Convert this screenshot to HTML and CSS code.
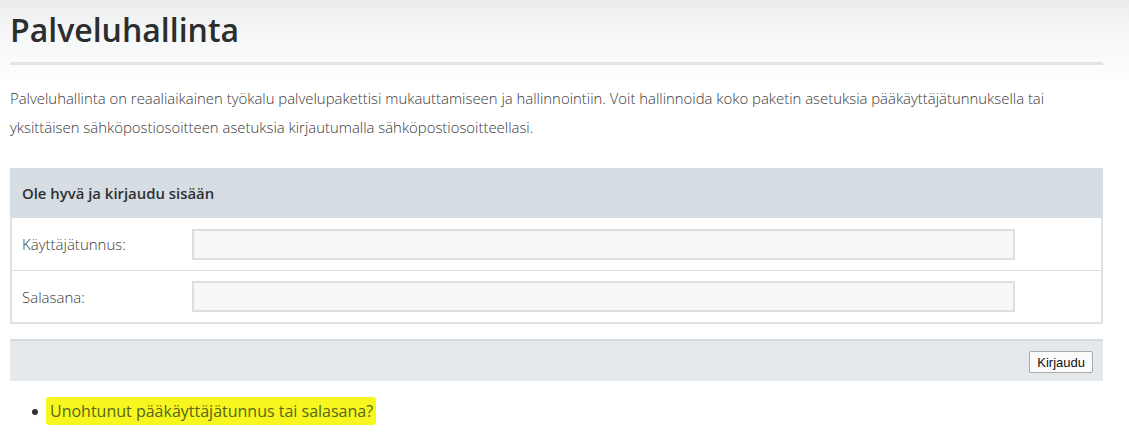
FILE: index.html
```html
<!DOCTYPE html>
<html lang="fi">
<head>
<meta charset="utf-8">
<title>Palveluhallinta</title>
<link rel="stylesheet" href="styles.css">
</head>
<body>
<div class="page">
  <header class="page-header">
    <h1 class="title">Palveluhallinta</h1>
  </header>
  <hr class="rule">
  <p class="intro">Palveluhallinta on reaaliaikainen työkalu palvelupakettisi mukauttamiseen ja hallinnointiin. Voit hallinnoida koko paketin asetuksia pääkäyttäjätunnuksella tai yksittäisen sähköpostiosoitteen asetuksia kirjautumalla sähköpostiosoitteellasi.</p>
  <form class="login">
    <div class="panel">
      <div class="panel-head">Ole hyvä ja kirjaudu sisään</div>
      <div class="row">
        <label class="label" for="user">Käyttäjätunnus:</label>
        <input class="field" id="user" type="text">
      </div>
      <div class="row">
        <label class="label" for="pass">Salasana:</label>
        <input class="field" id="pass" type="password">
      </div>
    </div>
    <div class="actions">
      <button class="btn" type="button">Kirjaudu</button>
    </div>
  </form>
  <ul class="links">
    <li><a class="forgot" href="#">Unohtunut pääkäyttäjätunnus tai salasana?</a></li>
  </ul>
</div>
</body>
</html>
```

FILE: styles.css
```css
html, body {
  margin: 0;
  padding: 0;
  background: #fff;
}
body {
  font-family: "Open Sans", "Noto Sans", sans-serif;
  color: #444;
}
.page {
  padding: 0 26px 0 10px;
  min-height: 434px;
  box-sizing: border-box;
  background: linear-gradient(to bottom, #ececec 0px, #f6f7f8 35px, #ffffff 85px) no-repeat;
  background-size: 100% 85px;
}
.page-header {
  height: 62px;
}
.title {
  margin: 0;
  padding-top: 8px;
  font-size: 32px;
  line-height: 44px;
  font-weight: 600;
  color: #2b2d2f;
}
.rule {
  margin: 0;
  border: 0;
  height: 3px;
  background: #e3e4e5;
}
.intro {
  margin: 19px 0 0;
  font-size: 14.9px;
  line-height: 29px;
  font-weight: 300;
  color: #3a3a3a;
}
.login {
  margin-top: 26px;
}
.panel {
  border: 2px solid #dde2e6;
  border-top: 0;
  background: #fff;
}
.panel-head {
  background: #d6dde3;
  height: 50px;
  display: flex;
  align-items: center;
  padding-left: 12px;
  margin: 0 -2px;
  font-size: 14.9px;
  font-weight: 600;
  color: #2e3134;
}
.row {
  display: grid;
  grid-template-columns: 170px 823px;
  align-items: center;
  height: 52px;
  padding-left: 10px;
}
.row + .row {
  border-top: 1px solid #dcdfe2;
  height: 51px;
}
.label {
  font-size: 15px;
  font-weight: 300;
  color: #3a3a3a;
}
.field {
  box-sizing: border-box;
  width: 823px;
  height: 31px;
  border: 2px solid #dedede;
  background: #f8f8f8;
  margin: 0;
  padding: 0 6px;
}
.actions {
  margin-top: 15px;
  background: #e6e9ec;
  border-top: 2px solid #d5dbe0;
  height: 40px;
  display: flex;
  justify-content: flex-end;
  align-items: center;
  padding-right: 10px;
}
.btn {
  font-family: "Liberation Sans", Arial, sans-serif;
  font-size: 13px;
  height: 22px;
  padding: 0 7px;
  border: 1px solid #a9a9a9;
  border-radius: 2px;
  background: #fbfbfb;
  color: #111;
  margin-top: 2px;
}
.links {
  margin: 19px 0 0;
  padding-left: 40px;
  font-size: 16px;
  line-height: 22px;
  color: #333;
}
.forgot {
  color: #56661b;
  text-decoration: none;
  background: #f7f71f;
  padding: 3px 3px 3px 4px;
  margin-left: -4px;
  border-radius: 3px;
}
```
